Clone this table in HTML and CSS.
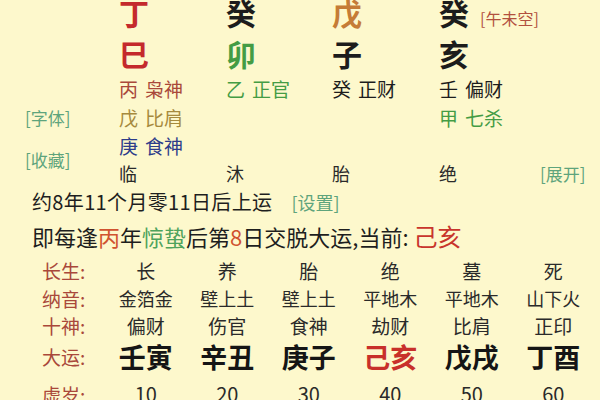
FILE: index.html
```html
<!DOCTYPE html>
<html lang="zh-CN">
<head>
<meta charset="utf-8">
<title>八字排盘</title>
<link rel="stylesheet" href="styles.css">
</head>
<body>
<div class="page">
  <div class="chart">
    <div class="stem c1 red">丁</div>
    <div class="stem c2">癸</div>
    <div class="stem c3 orange">戊</div>
    <div class="stem c4 wide">癸<span class="kong">[午未空]</span></div>

    <div class="stem c1 red">巳</div>
    <div class="stem c2 green">卯</div>
    <div class="stem c3">子</div>
    <div class="stem c4">亥</div>

    <div class="hid c1 brown"><span>丙</span><span>枭神</span></div>
    <div class="hid c2 green"><span>乙</span><span>正官</span></div>
    <div class="hid c3"><span>癸</span><span>正财</span></div>
    <div class="hid c4"><span>壬</span><span>偏财</span></div>

    <div class="link side r4">[字体]</div>
    <div class="hid c1 ochre"><span>戊</span><span>比肩</span></div>
    <div class="hid c4 green"><span>甲</span><span>七杀</span></div>

    <div class="link side r56">[收藏]</div>
    <div class="hid c1 navy r5"><span>庚</span><span>食神</span></div>

    <div class="cs c1 r6">临</div>
    <div class="cs c2 r6">沐</div>
    <div class="cs c3 r6">胎</div>
    <div class="cs c4 r6">绝</div>
    <div class="link c5 r6">[展开]</div>
  </div>

  <p class="line1">约8年11个月零11日后上运<span class="link set">[设置]</span></p>
  <p class="line2">即每逢<span class="hl-red">丙</span>年<span class="hl-green">惊蛰</span>后第<span class="hl-red">8</span>日交脱大运,当前: <span class="cur">己亥</span></p>

  <div class="table">
    <div class="lbl">长生:</div>
    <div class="v">长</div><div class="v">养</div><div class="v">胎</div><div class="v">绝</div><div class="v">墓</div><div class="v">死</div>

    <div class="lbl">纳音:</div>
    <div class="v sm">金箔金</div><div class="v sm">壁上土</div><div class="v sm">壁上土</div><div class="v sm">平地木</div><div class="v sm">平地木</div><div class="v sm">山下火</div>

    <div class="lbl">十神:</div>
    <div class="v">偏财</div><div class="v">伤官</div><div class="v">食神</div><div class="v">劫财</div><div class="v">比肩</div><div class="v">正印</div>

    <div class="lbl">大运:</div>
    <div class="v big">壬寅</div><div class="v big">辛丑</div><div class="v big">庚子</div><div class="v big cur-big">己亥</div><div class="v big">戊戌</div><div class="v big">丁酉</div>

    <div class="lbl">虚岁:</div>
    <div class="v num">10</div><div class="v num">20</div><div class="v num">30</div><div class="v num">40</div><div class="v num">50</div><div class="v num">60</div>
  </div>
</div>
</body>
</html>
```

FILE: styles.css
```css
html, body {
  margin: 0;
  padding: 0;
}
body {
  background: #fdf8cc;
  font-family: "Noto Sans CJK SC", "Noto Sans", sans-serif;
  color: #1c1c1c;
  width: 600px;
  height: 400px;
  overflow: hidden;
}
.page {
  display: flex;
  flex-direction: column;
}

/* top pillars */
.chart {
  display: grid;
  grid-template-columns: 119px 107px 106px 107px 101px 1fr;
  grid-template-rows: 42px 40px 30px 28px 28px 28px;
  margin-top: -9px;
  align-items: center;
}
.c1 { grid-column: 2; }
.c2 { grid-column: 3; }
.c3 { grid-column: 4; }
.c4 { grid-column: 5; }
.c5 { grid-column: 6; }
.wide { grid-column: 5 / 7; }
.r4 { grid-row: 4; }
.r5 { grid-row: 5; }
.r6 { grid-row: 6; }
.r56 { grid-row: 5 / 7; }
.side { grid-column: 1; padding-left: 25px; }

.stem {
  font-size: 30px;
  line-height: 1;
  font-weight: 700;
  white-space: nowrap;
}
.kong {
  font-size: 16px;
  font-weight: 400;
  color: #b2503e;
  margin-left: 11px;
}
.hid {
  font-size: 19px;
  line-height: 1;
  display: flex;
  gap: 7px;
  white-space: nowrap;
}
.cs {
  font-size: 18px;
  line-height: 1;
  color: #2a2a2a;
}
.link {
  font-size: 17px;
  line-height: 1;
  color: #5ea47c;
  white-space: nowrap;
}

.red { color: #c42a2c; }
.orange { color: #c57c36; }
.green { color: #449c44; }
.brown { color: #a9483a; }
.ochre { color: #a68a3e; }
.navy { color: #2d3c8a; }

/* text lines */
.line1, .line2 {
  margin: 0;
  padding-left: 32px;
  white-space: nowrap;
  color: #1e1e1e;
}
.line1 { font-size: 20px; line-height: 30px; letter-spacing: 0.35px; }
.line2 { font-size: 22px; line-height: 34px; margin-top: 2px; }
.set { font-size: 18px; margin-left: 19px; letter-spacing: 0; }
.hl-red { color: #d0532f; }
.hl-green { color: #4fa35c; }
.cur {
  font-size: 24px;
  color: #c8352c;
}

/* luck table */
.table {
  display: grid;
  grid-template-columns: 105px repeat(6, 81.5px);
  grid-template-rows: 27.5px 27.5px 27.5px 34px 41px;
  margin-top: 4px;
  align-items: center;
}
.lbl {
  padding-left: 42px;
  font-size: 19px;
  line-height: 1;
  color: #a9483a;
}
.v {
  text-align: center;
  font-size: 19px;
  line-height: 1;
  color: #2a2a2a;
  white-space: nowrap;
}
.v.sm { font-size: 18px; }
.v.big {
  font-size: 27px;
  font-weight: 700;
  color: #151515;
}
.v.big.cur-big { color: #c8302a; }
.v.num { font-size: 20px; }
```
